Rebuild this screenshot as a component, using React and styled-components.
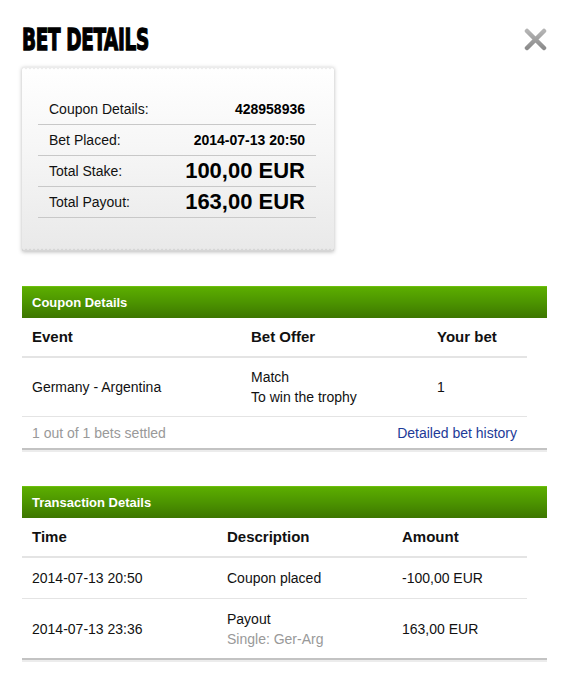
import React from 'react';
import styled, { createGlobalStyle } from 'styled-components';

const GlobalStyle = createGlobalStyle`
  body {
    margin: 0;
    background: #fff;
    font-family: "Liberation Sans", Arial, sans-serif;
    color: #111;
  }
`;

const Page = styled.div`
  width: 525px;
  padding: 23px 19px 20px 22px;
`;

const TitleBar = styled.div`
  display: flex;
  justify-content: space-between;
  align-items: center;
  height: 32px;
`;

const Title = styled.h1`
  margin: 0;
  font-family: "Liberation Sans Narrow", "DejaVu Sans Condensed", sans-serif;
  font-weight: bold;
  font-size: 31px;
  letter-spacing: -0.5px;
  -webkit-text-stroke: 1.3px #000;
  color: #000;
  transform: scaleX(0.66);
  transform-origin: left center;
  white-space: nowrap;
`;

const Close = styled.button`
  border: 0;
  padding: 0;
  background: none;
  width: 23px;
  height: 23px;
  cursor: pointer;
  svg { display: block; }
`;

const Receipt = styled.div`
  position: relative;
  width: 312px;
  margin-top: 12px;
  padding: 27px 18px 33px 16px;
  box-sizing: border-box;
  background: linear-gradient(#ffffff, #f6f6f6 45%, #e9e9e9);
  box-shadow: 0 1px 4px rgba(0, 0, 0, 0.28);

  &::before, &::after {
    content: '';
    position: absolute;
    left: 0;
    right: 0;
    height: 3px;
    background-size: 4px 3px;
  }
  &::before { top: 0; background-image: radial-gradient(circle at 2px 3px, #fff 1.5px, #ececec 2px); }
  &::after { bottom: 0; background-image: radial-gradient(circle at 2px 0, #e9e9e9 1.5px, #d6d6d6 2px); }
`;

const ReceiptRow = styled.div`
  display: flex;
  justify-content: space-between;
  align-items: center;
  height: 30px;
  padding: 0 11px;
  border-bottom: 1px solid #c8c8c8;
  font-size: 14px;
  color: #111;
`;

const ReceiptValue = styled.span`
  font-weight: bold;
  font-size: ${p => (p.$big ? '22px' : '14px')};
  color: #000;
`;

const Section = styled.section`
  margin-top: ${p => p.$top}px;
  border-bottom: 2px solid #c3c3c3;
  box-shadow: 0 2px 0 #ececec;
`;

const SectionHead = styled.div`
  height: 32px;
  display: flex;
  align-items: center;
  padding: 0 10px;
  background: linear-gradient(#5cae00, #4c9400 50%, #3d7600);
  border-top: 1px solid #6cc00c;
  box-sizing: border-box;
  color: #fff;
  font-weight: bold;
  font-size: 13px;
`;

const Table = styled.div`
  width: 505px;
`;

const Row = styled.div`
  display: grid;
  grid-template-columns: ${p => p.$cols};
  align-items: center;
  height: ${p => p.$h}px;
  padding-left: 10px;
  box-sizing: border-box;
  border-bottom: ${p => (p.$head ? '2px' : '1px')} solid #e4e4e4;
  font-size: ${p => (p.$head ? '15px' : '14px')};
  font-weight: ${p => (p.$head ? 'bold' : 'normal')};
  color: #111;
  &:last-child { border-bottom: 0; }
`;

const Cell = styled.div`
  line-height: 20px;
`;

const Sub = styled.div`
  color: #999;
`;

const Footer = styled.div`
  display: flex;
  justify-content: space-between;
  align-items: center;
  height: 31px;
  padding: 0 10px;
  font-size: 14px;
`;

const Muted = styled.span`
  color: #999;
`;

const Link = styled.a`
  color: #1d3a98;
  text-decoration: none;
`;

const couponCols = '219px 186px 90px';
const txCols = '195px 175px 125px';

const App = () => (
  <Page>
    <GlobalStyle />
    <TitleBar>
      <Title>BET DETAILS</Title>
      <Close aria-label="close">
        <svg width="23" height="23" viewBox="0 0 23 23">
          <defs>
            <linearGradient id="xg" x1="0" y1="0" x2="0" y2="1">
              <stop offset="0" stopColor="#b4b4b4" />
              <stop offset="1" stopColor="#8c8c8c" />
            </linearGradient>
          </defs>
          <path d="M3 3 L20 20 M20 3 L3 20" stroke="url(#xg)" strokeWidth="4.5" strokeLinecap="round" />
        </svg>
      </Close>
    </TitleBar>

    <Receipt>
      <ReceiptRow><span>Coupon Details:</span><ReceiptValue>428958936</ReceiptValue></ReceiptRow>
      <ReceiptRow><span>Bet Placed:</span><ReceiptValue>2014-07-13 20:50</ReceiptValue></ReceiptRow>
      <ReceiptRow><span>Total Stake:</span><ReceiptValue $big>100,00 EUR</ReceiptValue></ReceiptRow>
      <ReceiptRow><span>Total Payout:</span><ReceiptValue $big>163,00 EUR</ReceiptValue></ReceiptRow>
    </Receipt>

    <Section $top={35}>
      <SectionHead>Coupon Details</SectionHead>
      <Table>
        <Row $head $cols={couponCols} $h={40}>
          <Cell>Event</Cell><Cell>Bet Offer</Cell><Cell>Your bet</Cell>
        </Row>
        <Row $cols={couponCols} $h={59}>
          <Cell>Germany - Argentina</Cell>
          <Cell>Match<br />To win the trophy</Cell>
          <Cell>1</Cell>
        </Row>
        <Footer>
          <Muted>1 out of 1 bets settled</Muted>
          <Link href="#">Detailed bet history</Link>
        </Footer>
      </Table>
    </Section>

    <Section $top={36}>
      <SectionHead>Transaction Details</SectionHead>
      <Table>
        <Row $head $cols={txCols} $h={40}>
          <Cell>Time</Cell><Cell>Description</Cell><Cell>Amount</Cell>
        </Row>
        <Row $cols={txCols} $h={41}>
          <Cell>2014-07-13 20:50</Cell><Cell>Coupon placed</Cell><Cell>-100,00 EUR</Cell>
        </Row>
        <Row $cols={txCols} $h={59}>
          <Cell>2014-07-13 23:36</Cell>
          <Cell>Payout<Sub>Single: Ger-Arg</Sub></Cell>
          <Cell>163,00 EUR</Cell>
        </Row>
      </Table>
    </Section>
  </Page>
);

export default App;
